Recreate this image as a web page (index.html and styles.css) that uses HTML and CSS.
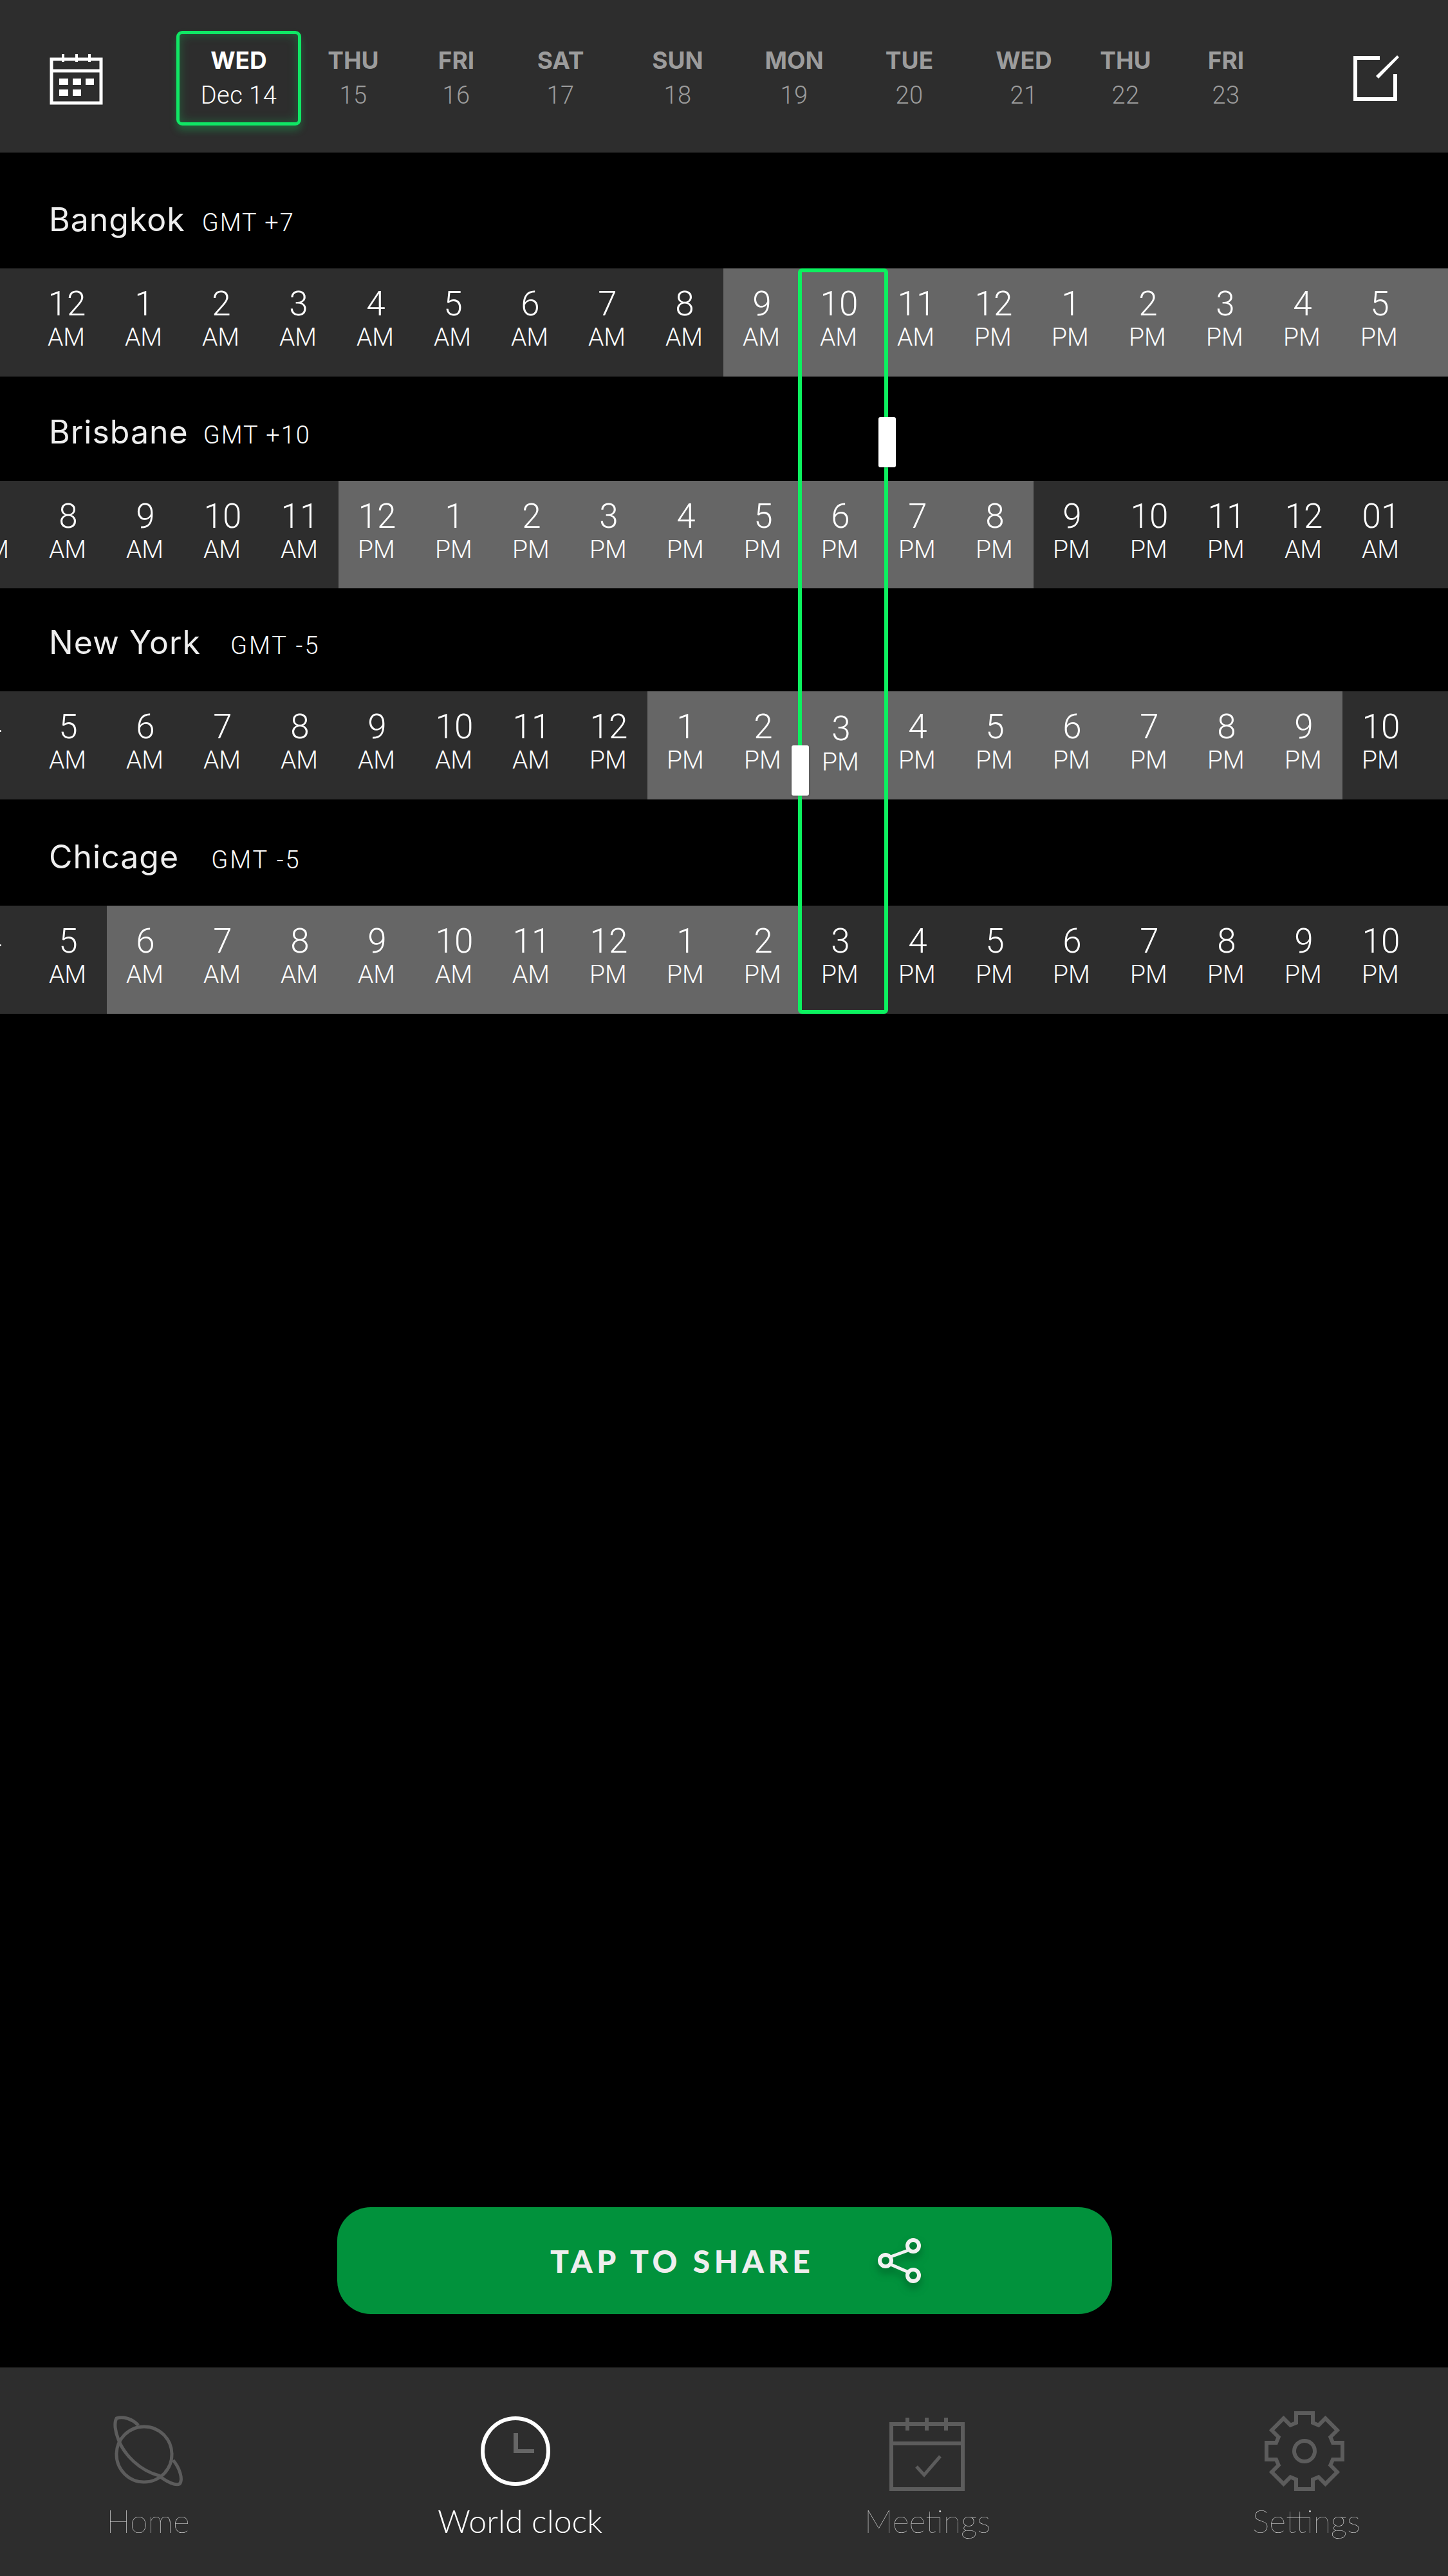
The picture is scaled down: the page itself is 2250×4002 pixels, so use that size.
FILE: index.html
```html
<!DOCTYPE html>
<html lang="en">
<head>
  <meta charset="UTF-8">
  <meta name="viewport" content="width=device-width, initial-scale=1.0">
  <title>World clock</title>
  <link rel="stylesheet" href="styles.css">
</head>
<body>

  <div class="app">
    <!-- Top date bar -->
    <header class="date-bar">
      <svg class="cal-icon" viewBox="0 0 83 79" width="83" height="79">
        <g fill="none" stroke="#fff" stroke-width="5">
          <rect x="3" y="8" width="77" height="68"/>
          <path d="M3 26h77"/>
        </g>
        <path d="M19 0h4v12h-4zM40 0h4v12h-4zM60 0h4v12h-4z" fill="#fff"/>
        <path d="M15 38h14v10H15zM36 38h13v10H36zM56 38h13v10H56zM15 55h14v10H15zM36 55h13v10H36z" fill="#fff"/>
      </svg>
      <div class="days">
        <div class="day selected"><b>WED</b><span>Dec 14</span></div>
        <div class="day"><b>THU</b><span>15</span></div>
        <div class="day"><b>FRI</b><span>16</span></div>
        <div class="day"><b>SAT</b><span>17</span></div>
        <div class="day"><b>SUN</b><span>18</span></div>
        <div class="day"><b>MON</b><span>19</span></div>
        <div class="day"><b>TUE</b><span>20</span></div>
        <div class="day"><b>WED</b><span>21</span></div>
        <div class="day"><b>THU</b><span>22</span></div>
        <div class="day"><b>FRI</b><span>23</span></div>
      </div>
      <svg class="edit-icon" viewBox="0 0 72 72" width="72" height="72">
        <path d="M41 5H3v64h62V30" fill="none" stroke="#fff" stroke-width="6"/>
        <path d="M71 4 39 37l-4-4L68 1z" fill="#fff"/>
      </svg>
    </header>

    <!-- Time zones -->
    <main class="zones">
      <div class="zone-label first">
        <span class="city">Bangkok</span><span class="gmt">GMT +7</span>
      </div>
      <div class="hours from-start">
        <div class="hour"><b>12</b><span>AM</span></div>
        <div class="hour"><b>1</b><span>AM</span></div>
        <div class="hour"><b>2</b><span>AM</span></div>
        <div class="hour"><b>3</b><span>AM</span></div>
        <div class="hour"><b>4</b><span>AM</span></div>
        <div class="hour"><b>5</b><span>AM</span></div>
        <div class="hour"><b>6</b><span>AM</span></div>
        <div class="hour"><b>7</b><span>AM</span></div>
        <div class="hour"><b>8</b><span>AM</span></div>
        <div class="hour on"><b>9</b><span>AM</span></div>
        <div class="hour on"><b>10</b><span>AM</span></div>
        <div class="hour on"><b>11</b><span>AM</span></div>
        <div class="hour on"><b>12</b><span>PM</span></div>
        <div class="hour on"><b>1</b><span>PM</span></div>
        <div class="hour on"><b>2</b><span>PM</span></div>
        <div class="hour on"><b>3</b><span>PM</span></div>
        <div class="hour on"><b>4</b><span>PM</span></div>
        <div class="hour on"><b>5</b><span>PM</span></div>
        <div class="hour on"></div>
      </div>

      <div class="zone-label second">
        <span class="city">Brisbane</span><span class="gmt">GMT +10</span>
      </div>
      <div class="hours">
        <div class="hour"><b></b><span>AM</span></div>
        <div class="hour"><b>8</b><span>AM</span></div>
        <div class="hour"><b>9</b><span>AM</span></div>
        <div class="hour"><b>10</b><span>AM</span></div>
        <div class="hour"><b>11</b><span>AM</span></div>
        <div class="hour on"><b>12</b><span>PM</span></div>
        <div class="hour on"><b>1</b><span>PM</span></div>
        <div class="hour on"><b>2</b><span>PM</span></div>
        <div class="hour on"><b>3</b><span>PM</span></div>
        <div class="hour on"><b>4</b><span>PM</span></div>
        <div class="hour on"><b>5</b><span>PM</span></div>
        <div class="hour on"><b>6</b><span>PM</span></div>
        <div class="hour on"><b>7</b><span>PM</span></div>
        <div class="hour on"><b>8</b><span>PM</span></div>
        <div class="hour"><b>9</b><span>PM</span></div>
        <div class="hour"><b>10</b><span>PM</span></div>
        <div class="hour"><b>11</b><span>PM</span></div>
        <div class="hour"><b>12</b><span>AM</span></div>
        <div class="hour"><b>01</b><span>AM</span></div>
      </div>

      <div class="zone-label third">
        <span class="city">New York</span><span class="gmt wide">GMT -5</span>
      </div>
      <div class="hours">
        <div class="hour peek"><b>4</b><span></span></div>
        <div class="hour"><b>5</b><span>AM</span></div>
        <div class="hour"><b>6</b><span>AM</span></div>
        <div class="hour"><b>7</b><span>AM</span></div>
        <div class="hour"><b>8</b><span>AM</span></div>
        <div class="hour"><b>9</b><span>AM</span></div>
        <div class="hour"><b>10</b><span>AM</span></div>
        <div class="hour"><b>11</b><span>AM</span></div>
        <div class="hour"><b>12</b><span>PM</span></div>
        <div class="hour on"><b>1</b><span>PM</span></div>
        <div class="hour on"><b>2</b><span>PM</span></div>
        <div class="hour on nudged"><b>3</b><span>PM</span></div>
        <div class="hour on"><b>4</b><span>PM</span></div>
        <div class="hour on"><b>5</b><span>PM</span></div>
        <div class="hour on"><b>6</b><span>PM</span></div>
        <div class="hour on"><b>7</b><span>PM</span></div>
        <div class="hour on"><b>8</b><span>PM</span></div>
        <div class="hour on"><b>9</b><span>PM</span></div>
        <div class="hour"><b>10</b><span>PM</span></div>
      </div>

      <div class="zone-label fourth">
        <span class="city">Chicage</span><span class="gmt wide">GMT -5</span>
      </div>
      <div class="hours">
        <div class="hour peek"><b>4</b><span></span></div>
        <div class="hour"><b>5</b><span>AM</span></div>
        <div class="hour on"><b>6</b><span>AM</span></div>
        <div class="hour on"><b>7</b><span>AM</span></div>
        <div class="hour on"><b>8</b><span>AM</span></div>
        <div class="hour on"><b>9</b><span>AM</span></div>
        <div class="hour on"><b>10</b><span>AM</span></div>
        <div class="hour on"><b>11</b><span>AM</span></div>
        <div class="hour on"><b>12</b><span>PM</span></div>
        <div class="hour on"><b>1</b><span>PM</span></div>
        <div class="hour on"><b>2</b><span>PM</span></div>
        <div class="hour"><b>3</b><span>PM</span></div>
        <div class="hour"><b>4</b><span>PM</span></div>
        <div class="hour"><b>5</b><span>PM</span></div>
        <div class="hour"><b>6</b><span>PM</span></div>
        <div class="hour"><b>7</b><span>PM</span></div>
        <div class="hour"><b>8</b><span>PM</span></div>
        <div class="hour"><b>9</b><span>PM</span></div>
        <div class="hour"><b>10</b><span>PM</span></div>
      </div>

      <!-- Selected hour frame and its drag handles -->
      <div class="focus"></div>
      <div class="handle handle-right"></div>
      <div class="handle handle-left"></div>
    </main>

    <!-- Share button -->
    <div class="share-area">
      <button class="share">
        <span>TAP TO SHARE</span>
        <svg class="share-icon" viewBox="0 0 68 72" width="68" height="72">
          <g fill="none" stroke="#f2f2f2">
            <path d="M50 19 20 30M20 42l30 13" stroke-width="5"/>
            <circle cx="12" cy="36" r="9" stroke-width="6"/>
            <circle cx="55" cy="13" r="9" stroke-width="6"/>
            <circle cx="55" cy="59" r="9" stroke-width="6"/>
          </g>
        </svg>
      </button>
    </div>

    <!-- Bottom tabs -->
    <nav class="tabs">
      <div class="tab tab-home">
        <svg class="tab-icon" viewBox="0 0 110 112" width="110" height="112">
          <g fill="none" stroke="#5c5c5c" stroke-width="5">
            <circle cx="49" cy="61" r="43"/>
            <path d="M40 16C30 5 16 2 6 5 2 12 4 26 9 38 18 62 42 86 72 94 84 104 98 110 104 107 110 100 104 82 94 70"/>
          </g>
        </svg>
        <span>Home</span>
      </div>
      <div class="tab tab-clock active">
        <svg class="tab-icon" viewBox="0 0 110 112" width="110" height="112">
          <circle cx="55" cy="56" r="51" fill="none" stroke="#fff" stroke-width="6"/>
          <path d="M52 28h7v25h25v6H52z" fill="#666"/>
        </svg>
        <span>World clock</span>
      </div>
      <div class="tab tab-meetings">
        <svg class="tab-icon" viewBox="0 0 118 114" width="118" height="114">
          <g fill="none" stroke="#5c5c5c" stroke-width="6">
            <rect x="3" y="10" width="111" height="101"/>
            <path d="M3 40h111"/>
            <path d="M28 0v20M58 0v20M88 0v20"/>
            <path d="M42 76l12 13 25-29" stroke-width="5"/>
          </g>
        </svg>
        <span>Meetings</span>
      </div>
      <div class="tab tab-settings">
        <svg class="tab-icon" viewBox="-62 -62 124 124" width="124" height="124">
          <polygon fill="none" stroke="#5c5c5c" stroke-width="6" points="-13,-44 -13,-59 13,-59 13,-44 21.9,-40.3 32.5,-50.9 50.9,-32.5 40.3,-21.9 44,-13 59,-13 59,13 44,13 40.3,21.9 50.9,32.5 32.5,50.9 21.9,40.3 13,44 13,59 -13,59 -13,44 -21.9,40.3 -32.5,50.9 -50.9,32.5 -40.3,21.9 -44,13 -59,13 -59,-13 -44,-13 -40.3,-21.9 -50.9,-32.5 -32.5,-50.9 -21.9,-40.3"/>
          <circle r="16" fill="none" stroke="#5c5c5c" stroke-width="6"/>
        </svg>
        <span>Settings</span>
      </div>
    </nav>
  </div>

</body>
</html>
```

FILE: styles.css
```css
body {
  margin: 0;
  background-color: #000;
  color: #fff;
  font-family: Roboto, Arial, sans-serif;
}

.app {
  width: 2250px;
  height: 4002px;
  display: flex;
  flex-direction: column;
  overflow: hidden;
}

/* Date bar */
.date-bar {
  height: 237px;
  flex-shrink: 0;
  background-color: #2d2d2d;
  display: flex;
  align-items: flex-start;
}

.cal-icon {
  margin: 84px 0 0 77px;
}

.days {
  margin: 48px 0 0 114px;
  display: grid;
  grid-template-columns: 194px 162px 158px 166px 198px 164px 194px 162px 154px 158px;
}

.day {
  height: 147px;
  box-sizing: border-box;
  display: flex;
  flex-direction: column;
  align-items: center;
  padding-top: 22px;
  color: #9c9c9c;
}

.day b {
  font-family: Inter, Roboto, sans-serif;
  font-size: 37px;
  font-weight: 700;
  line-height: 48px;
}

.day span {
  font-size: 38px;
  font-weight: 300;
  letter-spacing: 0.5px;
  line-height: 48px;
  margin-top: 6px;
}

.day.selected {
  color: #fff;
  border: 5px solid #10e765;
  border-radius: 9px;
  padding-top: 17px;
  box-shadow: 0 8px 12px rgba(16, 231, 101, 0.25), inset 0 0 16px rgba(16, 231, 101, 0.28);
}

.edit-icon {
  margin: 85px 0 0 119px;
}

/* Zones */
.zones {
  position: relative;
  flex-shrink: 0;
}

.zone-label {
  display: flex;
  align-items: baseline;
  padding-left: 76px;
  box-sizing: border-box;
}

.zone-label.first {
  height: 180px;
  padding-top: 76px;
  gap: 26px;
}

.zone-label.second {
  height: 162px;
  padding-top: 58px;
  gap: 23px;
}

.zone-label.third {
  height: 160px;
  padding-top: 56px;
  gap: 46px;
}

.zone-label.fourth {
  height: 165.5px;
  padding-top: 61px;
  gap: 50px;
}

.city {
  font-family: Inter, Roboto, sans-serif;
  font-size: 50px;
  font-weight: 400;
  letter-spacing: 1px;
  line-height: 56px;
  color: #eee;
}

.gmt {
  font-size: 38px;
  font-weight: 300;
  letter-spacing: 2px;
}

.gmt.wide {
  letter-spacing: 3px;
}

.hours {
  height: 167.5px;
  display: flex;
  background-color: #2d2d2d;
  margin-left: -74px;
  width: 2324px;
  overflow: hidden;
}

.hours.from-start {
  margin-left: 0;
  width: 2250px;
  padding-left: 44px;
  box-sizing: border-box;
}

.hour {
  width: 120px;
  flex-shrink: 0;
  display: flex;
  flex-direction: column;
  align-items: center;
  padding-top: 27px;
  box-sizing: border-box;
}

.hour.on {
  background-color: #666;
}

.hour b {
  font-size: 53px;
  font-weight: 300;
  line-height: 56px;
  height: 56px;
}

.hour span {
  font-size: 39px;
  font-weight: 300;
  line-height: 44px;
  margin-top: 2px;
  margin-right: 2px;
}

.hour.peek b {
  margin-left: 4px;
}

.hour.nudged b,
.hour.nudged span {
  position: relative;
  top: 3px;
  left: 1px;
}

.focus {
  position: absolute;
  left: 1240px;
  top: 180px;
  width: 140px;
  height: 1158px;
  box-sizing: border-box;
  border: 6px solid #0cf05f;
  border-radius: 6px;
}

.handle {
  position: absolute;
  width: 27px;
  height: 78px;
  background-color: #fff;
  border-radius: 3px;
  box-shadow: 0 1px 3px rgba(0, 0, 0, 0.3);
}

.handle-right {
  left: 1365px;
  top: 411px;
}

.handle-left {
  left: 1230px;
  top: 921px;
}

/* Share button */
.share-area {
  flex-grow: 1;
  display: flex;
  align-items: flex-end;
  justify-content: center;
  padding: 0 0 83px 2px;
}

.share {
  width: 1204px;
  height: 166px;
  border: none;
  border-radius: 52px;
  background-color: #01923c;
  color: #eee;
  display: flex;
  align-items: center;
  padding: 0 0 0 331px;
  font-family: Lato, sans-serif;
  font-size: 48px;
  font-weight: 900;
  letter-spacing: 6.5px;
}

.share-icon {
  margin-left: 99px;
  filter: drop-shadow(0 8px 6px rgba(0, 70, 30, 0.55));
}

/* Bottom tabs */
.tabs {
  height: 324px;
  flex-shrink: 0;
  background-color: #2d2d2d;
  display: flex;
}

.tab {
  position: relative;
  display: flex;
  flex-direction: column;
  align-items: center;
  font-family: Lato, sans-serif;
  font-size: 50px;
  font-weight: 100;
  color: #e4e4e4;
}

.tab-home {
  width: 460px;
  padding-top: 74px;
}

.tab-clock {
  width: 696px;
  padding-top: 74px;
}

.tab-clock .tab-icon {
  margin-right: 14px;
}

.tab-meetings {
  width: 570px;
  padding-top: 78px;
}

.tab-settings {
  width: 440px;
  margin-left: 84px;
  padding-top: 68px;
}

.tab-settings .tab-icon {
  margin-right: 7px;
}

.tab-icon {
  display: block;
}

.tab span {
  position: absolute;
  top: 208px;
  line-height: 60px;
}

.tab.active {
  font-weight: 300;
  color: #fff;
}
```
